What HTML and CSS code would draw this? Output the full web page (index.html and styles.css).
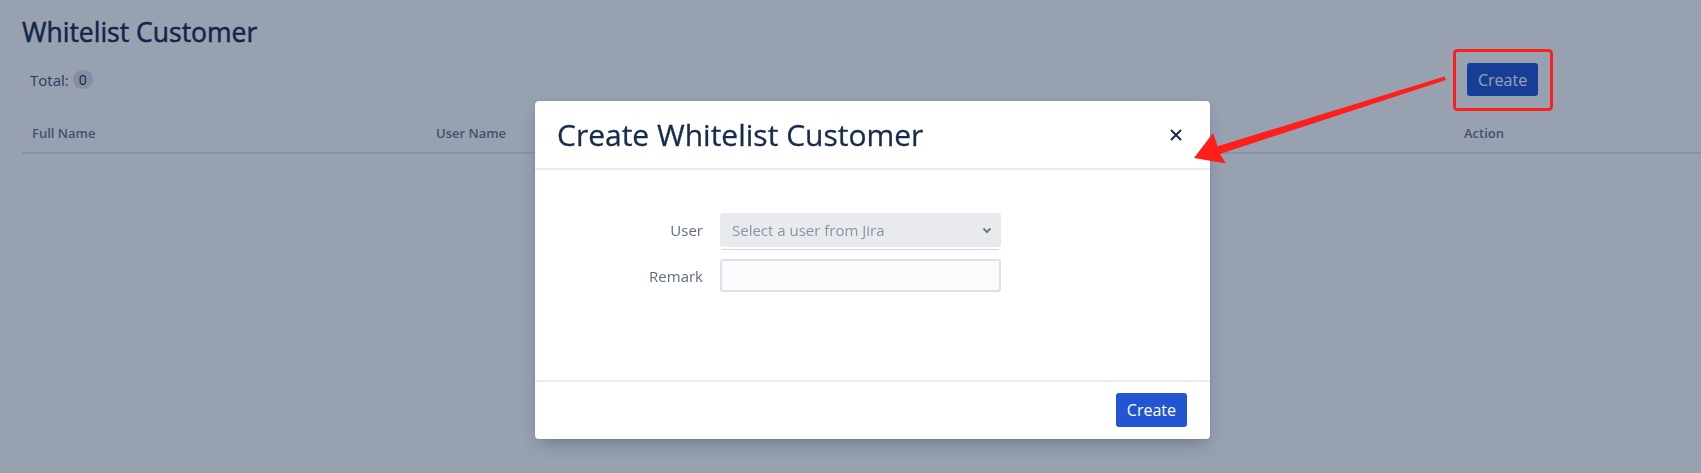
FILE: index.html
```html
<!DOCTYPE html>
<html lang="en">
<head>
<meta charset="utf-8">
<title>Whitelist Customer</title>
<link rel="stylesheet" href="styles.css">
</head>
<body>
<div class="page">
  <h1 class="page-title">Whitelist Customer</h1>
  <div class="toolbar">
    <div class="total">Total: <span class="badge">0</span></div>
    <button class="btn btn-primary toolbar-btn" type="button">Create</button>
  </div>
  <div class="table">
    <div class="th">Full Name</div>
    <div class="th">User Name</div>
    <div class="th"></div>
    <div class="th">Action</div>
  </div>
</div>

<div class="blanket">
  <div class="modal">
    <div class="modal-header">
      <h2 class="modal-title">Create Whitelist Customer</h2>
      <button class="modal-close" type="button" aria-label="Close">
        <svg width="12" height="12" viewBox="0 0 12 12"><path d="M1 1L11 11M11 1L1 11" stroke="#172b4d" stroke-width="2" fill="none"/></svg>
      </button>
    </div>
    <div class="modal-body">
      <div class="form-row">
        <label class="form-label">User</label>
        <div class="select-wrap">
          <div class="select">
            <span class="placeholder">Select a user from Jira</span>
            <svg class="chevron" width="10" height="7" viewBox="0 0 10 7"><path d="M1.5 1.5L5 5l3.5-3.5" stroke="#6b778c" stroke-width="2" fill="none"/></svg>
          </div>
          <div class="select-line"></div>
        </div>
      </div>
      <div class="form-row">
        <label class="form-label">Remark</label>
        <input class="input" type="text">
      </div>
    </div>
    <div class="modal-footer">
      <button class="btn btn-primary" type="button">Create</button>
    </div>
  </div>
</div>

<svg class="annotation" width="1701" height="473" viewBox="0 0 1701 473">
  <rect x="1454.5" y="50.5" width="97" height="59" rx="3" ry="3" fill="none" stroke="#ff1f1a" stroke-width="3"/>
  <polygon points="1444.5,76.5 1217.6,146.3 1213,133 1194,158 1226,163.5 1220,153.9 1446,80" fill="#ff1f1a"/>
</svg>
</body>
</html>
```
FILE: styles.css
```css
* { box-sizing: border-box; }

html, body {
  margin: 0;
  padding: 0;
  background: #ffffff;
  font-family: "Segoe UI", "Open Sans", "Noto Sans", sans-serif;
  color: #172b4d;
  width: 1701px;
  height: 473px;
  overflow: hidden;
}

.page {
  padding: 0 0 0 22px;
}

.page-title {
  margin: 15px 0 0;
  font-size: 26.5px;
  line-height: 34px;
  font-weight: 500;
  color: #172b4d;
  -webkit-text-stroke: 0.5px #172b4d;
}

.toolbar {
  margin-top: 14px;
  display: grid;
  grid-template-columns: 404px 414px 614px 1fr;
  align-items: center;
  height: 33px;
}

.total {
  grid-column: 1;
  padding-left: 8px;
  font-size: 15px;
  color: #42526e;
  display: flex;
  align-items: center;
  gap: 4px;
}

.badge {
  display: inline-flex;
  align-items: center;
  justify-content: center;
  width: 20px;
  height: 19px;
  border-radius: 10px;
  background: #dfe1e6;
  color: #172b4d;
  font-size: 14px;
}

.toolbar-btn {
  grid-column: 4;
  justify-self: start;
  margin-left: 13px;
}

.btn {
  font-family: inherit;
  font-size: 16px;
  line-height: 20px;
  font-weight: 500;
  border: 0;
  border-radius: 3px;
  height: 33px;
  padding: 0 11px;
  cursor: pointer;
}

.btn-primary {
  background: #2255d3;
  color: #ffffff;
}

.table {
  margin-top: 18px;
  display: grid;
  grid-template-columns: 404px 414px 614px 1fr;
  border-bottom: 2px solid #e4e5e9;
}

.th {
  padding: 9px 10px;
  font-size: 13px;
  line-height: 20px;
  font-weight: 600;
  color: #6b778c;
  min-height: 38px;
}

.blanket {
  position: fixed;
  inset: 0;
  background: rgba(9, 30, 66, 0.42);
  display: flex;
  justify-content: center;
  align-items: flex-start;
  padding: 101px 0 0 44px;
}

.modal {
  width: 675px;
  background: #ffffff;
  border-radius: 4px;
  box-shadow: 0 8px 16px -4px rgba(9, 30, 66, 0.3), 0 0 1px rgba(9, 30, 66, 0.31);
  display: flex;
  flex-direction: column;
}

.modal-header {
  height: 69px;
  display: flex;
  align-items: center;
  justify-content: space-between;
  padding: 0 28px 0 22px;
  border-bottom: 2px solid #ebecf0;
}

.modal-title {
  margin: 0;
  font-size: 30px;
  line-height: 40px;
  font-weight: 400;
  color: #172b4d;
  -webkit-text-stroke: 0.3px #172b4d;
}

.modal-close {
  border: 0;
  background: transparent;
  padding: 0;
  width: 12px;
  height: 12px;
  display: flex;
  cursor: pointer;
}

.modal-body {
  padding: 43px 0 87px;
  display: flex;
  flex-direction: column;
  gap: 9px;
}

.form-row {
  display: grid;
  grid-template-columns: 168px 281px;
  column-gap: 17px;
  align-items: start;
}

.form-label {
  text-align: right;
  font-size: 15px;
  line-height: 34px;
  color: #5e6c84;
}

.select-wrap {
  display: flex;
  flex-direction: column;
}

.select {
  height: 34px;
  background: #e9eaee;
  border-radius: 3px;
  display: flex;
  align-items: center;
  justify-content: space-between;
  padding: 0 9px 0 12px;
}

.placeholder {
  font-size: 15px;
  color: #8993a4;
}

.select-line {
  margin: 2px 2px 0;
  height: 1px;
  background: #c8d8f2;
}

.input {
  height: 33px;
  width: 281px;
  border: 2px solid #dfe1e6;
  border-radius: 3px;
  background: #fafbfc;
  font-family: inherit;
  font-size: 15px;
}

.modal-footer {
  border-top: 2px solid #ebecf0;
  display: flex;
  justify-content: flex-end;
  padding: 11px 23px 12px;
}

.modal-footer .btn {
  height: 34px;
}

.annotation {
  position: fixed;
  left: 0;
  top: 0;
  pointer-events: none;
}
```
